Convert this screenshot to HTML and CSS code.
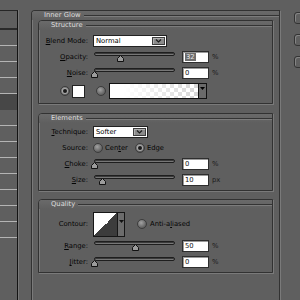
FILE: index.html
```html
<!DOCTYPE html>
<html>
<head>
<meta charset="utf-8">
<link rel="stylesheet" href="styles.css">
</head>
<body>
<div class="sidebar">
  <div class="side-head"></div>
  <div class="item"></div>
  <div class="item"></div>
  <div class="item"></div>
  <div class="item"></div>
  <div class="item sel"></div>
  <div class="item"></div>
  <div class="item"></div>
  <div class="item"></div>
  <div class="item"></div>
  <div class="item"></div>
  <div class="item"></div>
  <div class="item"></div>
  <div class="item"></div>
</div>

<section class="group outer">
  <div class="ghead"><span class="title">Inner Glow</span><span class="rule"></span></div>

  <section class="group sub structure">
    <div class="ghead"><span class="title">Structure</span><span class="rule"></span></div>
    <div class="body">
      <div class="row">
        <span class="lbl"><u>B</u>lend Mode:</span>
        <div class="select w-normal"><span class="sel-text">Normal</span><span class="drop"><svg width="7" height="4" viewBox="0 0 7 4"><path d="M1 0.5 L3.5 3 L6 0.5" fill="none" stroke="#1c1c1c" stroke-width="1.2"/></svg></span></div>
      </div>
      <div class="row">
        <span class="lbl"><u>O</u>pacity:</span>
        <div class="slider"><div class="track"></div><svg class="thumb" style="left:32%" width="7" height="7" viewBox="0 0 7 7"><path d="M3.5 0.5 L6.5 3.5 L6.5 6.5 L0.5 6.5 L0.5 3.5 Z" fill="#9c9c9c" stroke="#111"/></svg></div>
        <div class="num"><span class="hl">32</span></div>
        <span class="unit">%</span>
      </div>
      <div class="row">
        <span class="lbl"><u>N</u>oise:</span>
        <div class="slider"><div class="track"></div><svg class="thumb" style="left:0%" width="7" height="7" viewBox="0 0 7 7"><path d="M3.5 0.5 L6.5 3.5 L6.5 6.5 L0.5 6.5 L0.5 3.5 Z" fill="#9c9c9c" stroke="#111"/></svg></div>
        <div class="num">0</div>
        <span class="unit">%</span>
      </div>
      <div class="row colors">
        <span class="radio on"></span>
        <span class="swatch"></span>
        <span class="radio r2"></span>
        <div class="gradbox"><span class="grad"></span><span class="gdrop"><svg width="5" height="3" viewBox="0 0 5 3"><path d="M0 0 L5 0 L2.5 3 Z" fill="#000"/></svg></span></div>
      </div>
    </div>
  </section>

  <section class="group sub elements">
    <div class="ghead"><span class="title">Elements</span><span class="rule"></span></div>
    <div class="body">
      <div class="row">
        <span class="lbl"><u>T</u>echnique:</span>
        <div class="select w-softer"><span class="sel-text">Softer</span><span class="drop"><svg width="7" height="4" viewBox="0 0 7 4"><path d="M1 0.5 L3.5 3 L6 0.5" fill="none" stroke="#1c1c1c" stroke-width="1.2"/></svg></span></div>
      </div>
      <div class="row">
        <span class="lbl">Source:</span>
        <span class="radio"></span>
        <span class="opt">Cen<u>t</u>er</span>
        <span class="radio on r-edge"></span>
        <span class="opt">Edge</span>
      </div>
      <div class="row">
        <span class="lbl"><u>C</u>hoke:</span>
        <div class="slider"><div class="track"></div><svg class="thumb" style="left:0%" width="7" height="7" viewBox="0 0 7 7"><path d="M3.5 0.5 L6.5 3.5 L6.5 6.5 L0.5 6.5 L0.5 3.5 Z" fill="#9c9c9c" stroke="#111"/></svg></div>
        <div class="num">0</div>
        <span class="unit">%</span>
      </div>
      <div class="row">
        <span class="lbl"><u>S</u>ize:</span>
        <div class="slider"><div class="track"></div><svg class="thumb" style="left:10%" width="7" height="7" viewBox="0 0 7 7"><path d="M3.5 0.5 L6.5 3.5 L6.5 6.5 L0.5 6.5 L0.5 3.5 Z" fill="#9c9c9c" stroke="#111"/></svg></div>
        <div class="num">10</div>
        <span class="unit">px</span>
      </div>
    </div>
  </section>

  <section class="group sub quality">
    <div class="ghead"><span class="title">Quality</span><span class="rule"></span></div>
    <div class="body">
      <div class="row tall">
        <span class="lbl">Contour:</span>
        <div class="contour"><span class="curve"></span><span class="cdrop"><svg width="5" height="3" viewBox="0 0 5 3"><path d="M0 0 L5 0 L2.5 3 Z" fill="#111"/></svg></span></div>
        <span class="radio check"></span>
        <span class="opt">Anti-a<u>l</u>iased</span>
      </div>
      <div class="row">
        <span class="lbl"><u>R</u>ange:</span>
        <div class="slider"><div class="track"></div><svg class="thumb" style="left:50%" width="7" height="7" viewBox="0 0 7 7"><path d="M3.5 0.5 L6.5 3.5 L6.5 6.5 L0.5 6.5 L0.5 3.5 Z" fill="#9c9c9c" stroke="#111"/></svg></div>
        <div class="num">50</div>
        <span class="unit">%</span>
      </div>
      <div class="row">
        <span class="lbl"><u>J</u>itter:</span>
        <div class="slider"><div class="track"></div><svg class="thumb" style="left:0%" width="7" height="7" viewBox="0 0 7 7"><path d="M3.5 0.5 L6.5 3.5 L6.5 6.5 L0.5 6.5 L0.5 3.5 Z" fill="#9c9c9c" stroke="#111"/></svg></div>
        <div class="num">0</div>
        <span class="unit">%</span>
      </div>
    </div>
  </section>
</section>

<div class="buttons">
  <div class="btn"></div>
  <div class="btn"></div>
  <div class="btn"></div>
</div>
</body>
</html>
```

FILE: styles.css
```css
html, body {
  margin: 0;
  padding: 0;
}
body {
  width: 300px;
  height: 300px;
  overflow: hidden;
  background: #5f5f5f;
  display: flex;
  align-items: flex-start;
  font-family: "DejaVu Sans", Verdana, sans-serif;
  font-size: 6.8px;
  color: #050505;
}

/* left list */
.sidebar {
  flex: none;
  width: 17px;
  height: 290px;
  margin-top: 10px;
  border-top: 1px solid #262626;
  border-right: 1px solid #141414;
  box-shadow: 1px 0 0 #777;
}
.side-head {
  height: 17px;
  border-bottom: 2px solid #2a2a2a;
}
.item {
  height: 15px;
  border-bottom: 1px solid #b4b4b4;
}
.item.sel {
  background: #474747;
  border-bottom-color: #474747;
}

/* group boxes */
.group {
  border: 1px solid #323232;
  border-top-left-radius: 4px;
  box-shadow: inset 1px 1px 0 #7a7a7a, 1px 1px 0 #7a7a7a;
}
.ghead {
  display: flex;
  align-items: center;
  height: 9px;
  padding-left: 12px;
  background: linear-gradient(#6a6a6a, #5f5f5f);
  border-top-left-radius: 3px;
}
.title {
  color: #dedede;
  padding-right: 3px;
  white-space: nowrap;
  line-height: 9px;
}
.rule {
  flex: 1;
  height: 1px;
  background: #343434;
  box-shadow: 0 1px 0 #7c7c7c;
}
.outer {
  flex: none;
  box-sizing: border-box;
  width: 249px;
  height: 290px;
  border-bottom: 0;
  margin-left: 13px;
  margin-top: 10px;
}
.sub {
  margin: 0 6px;
}
.body {
  padding: 1px 0 2px;
}
.structure .body {
  padding-top: 3px;
}
.elements {
  margin-top: 9px;
}
.quality {
  margin-top: 8px;
}

/* rows */
.row {
  display: flex;
  align-items: center;
  height: 16px;
}
.row.tall {
  height: 28px;
}
.row.colors {
  height: 20px;
  padding-left: 21px;
}
.lbl {
  flex: none;
  width: 49px;
  margin-right: 5px;
  text-align: right;
  white-space: nowrap;
}
u {
  text-decoration-thickness: 1px;
  text-underline-offset: 1px;
}

/* select */
.select {
  flex: none;
  box-sizing: border-box;
  height: 12px;
  background: #fff;
  border: 1px solid #222;
  display: flex;
  align-items: center;
  justify-content: space-between;
  padding: 0 1px 0 2px;
}
.w-normal { width: 74px; }
.w-softer { width: 55px; }
.sel-text {
  color: #000;
}
.drop {
  box-sizing: border-box;
  width: 13px;
  height: 8px;
  background: #8c8c8c;
  border: 1px solid #3e3e3e;
  box-shadow: inset 1px 1px 0 #b0b0b0;
  display: flex;
  align-items: center;
  justify-content: center;
}
.drop svg { display: block; }

/* slider */
.slider {
  flex: none;
  position: relative;
  width: 81px;
  height: 12px;
  margin-left: 1px;
  margin-right: 7px;
}
.track {
  box-sizing: border-box;
  margin-top: 1px;
  height: 4px;
  border: 1px solid #1e1e1e;
  border-radius: 2px;
  background: #777;
  box-shadow: inset 0 1px 0 #3a3a3a;
}
.thumb {
  position: absolute;
  top: 4px;
  margin-left: -3px;
  display: block;
}

/* numeric field */
.num {
  flex: none;
  box-sizing: border-box;
  width: 27px;
  height: 12px;
  background: #fff;
  border: 1px solid #2e2e2e;
  box-shadow: inset 1px 1px 0 #9a9a9a;
  padding-left: 2px;
  line-height: 10px;
  color: #111;
}
.hl {
  background: #6e6e6e;
  color: #e6e6e6;
  padding: 0 1px;
}
.unit {
  margin-left: 3px;
  color: #1a1a1a;
}

/* radio buttons */
.radio {
  flex: none;
  box-sizing: border-box;
  width: 10px;
  height: 10px;
  border-radius: 50%;
  border: 1px solid #3c3c3c;
  background: radial-gradient(circle at 40% 35%, #a2a2a2, #5c5c5c 75%);
  display: grid;
  place-items: center;
}
.radio.on::after {
  content: "";
  width: 4px;
  height: 4px;
  border-radius: 50%;
  background: #1a1a1a;
  box-shadow: 0 0 0 1px #a8a8a8;
}
.opt {
  margin-left: 2px;
  white-space: nowrap;
}
.r-edge {
  margin-left: 7px;
}
.check {
  margin-left: 12px;
}
.check + .opt {
  margin-left: 3px;
}

/* colour row */
.swatch {
  flex: none;
  box-sizing: border-box;
  width: 13px;
  height: 13px;
  margin-left: 2px;
  background: #fff;
  border: 1px solid #222;
}
.r2 {
  margin-left: 11px;
}
.gradbox {
  flex: none;
  box-sizing: border-box;
  width: 98px;
  height: 16px;
  margin-left: 3px;
  border: 1px solid #111;
  display: flex;
}
.grad {
  flex: 1;
  background:
    linear-gradient(to right, #fff 0%, #fff 15%, rgba(255,255,255,0) 100%),
    repeating-conic-gradient(#d6d6d6 0 25%, #fff 0 50%) 0 0 / 8px 8px;
}
.gdrop {
  flex: none;
  width: 8px;
  border-left: 1px solid #111;
  background: #6a6a6a;
  display: flex;
  justify-content: center;
  padding-top: 3px;
  box-sizing: border-box;
}
.gdrop svg, .cdrop svg { display: block; }

/* contour */
.contour {
  flex: none;
  box-sizing: border-box;
  width: 32px;
  height: 25px;
  border: 1px solid #161616;
  display: flex;
}
.curve {
  flex: 1;
  background: linear-gradient(to bottom right, #fff 50%, #3c3c3c 50%);
}
.cdrop {
  flex: none;
  width: 7px;
  box-sizing: border-box;
  border-left: 1px solid #161616;
  background: #6c6c6c;
  display: flex;
  justify-content: center;
  padding-top: 7px;
}

/* right-hand buttons, cut off by the window edge */
.buttons {
  flex: none;
  width: 6px;
  overflow: hidden;
  margin-left: 14px;
  padding-top: 12px;
  display: flex;
  flex-direction: column;
  gap: 10px;
}
.btn {
  flex: none;
  width: 30px;
  height: 12px;
  box-sizing: border-box;
  border: 1px solid #333;
  border-radius: 3px;
  box-shadow: inset 1px 1px 0 #848484;
}
```
